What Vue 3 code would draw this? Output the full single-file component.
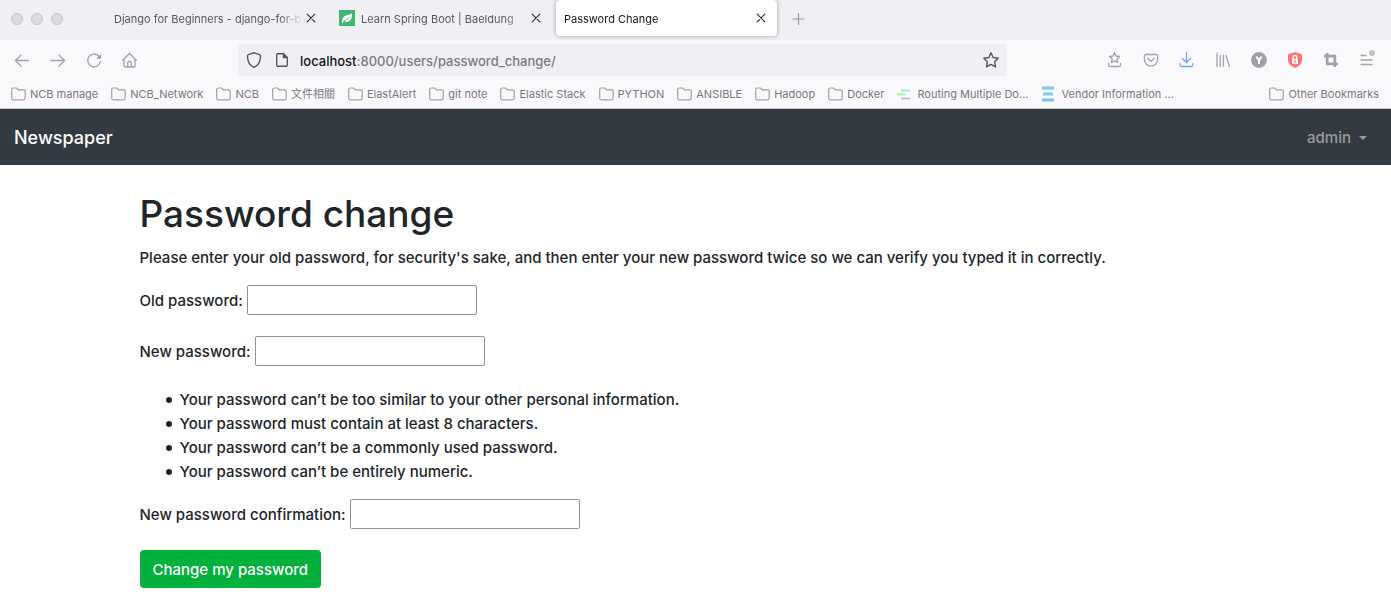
<script setup>
import { ref } from 'vue'

const tabs = [
  { title: 'Django for Beginners - django-for-b', icon: false, active: false },
  { title: 'Learn Spring Boot | Baeldung', icon: true, active: false },
  { title: 'Password Change', icon: false, active: true }
]

const bookmarks = [
  { name: 'NCB manage', icon: 'folder' },
  { name: 'NCB_Network', icon: 'folder' },
  { name: 'NCB', icon: 'folder' },
  { name: '文件相關', icon: 'folder' },
  { name: 'ElastAlert', icon: 'folder' },
  { name: 'git note', icon: 'folder' },
  { name: 'Elastic Stack', icon: 'folder' },
  { name: 'PYTHON', icon: 'folder' },
  { name: 'ANSIBLE', icon: 'folder' },
  { name: 'Hadoop', icon: 'folder' },
  { name: 'Docker', icon: 'folder' },
  { name: 'Routing Multiple Do...', icon: 'routes' },
  { name: 'Vendor Information ...', icon: 'stack' },
  { name: 'Other Bookmarks', icon: 'folder', last: true }
]

const hints = [
  'Your password can’t be too similar to your other personal information.',
  'Your password must contain at least 8 characters.',
  'Your password can’t be a commonly used password.',
  'Your password can’t be entirely numeric.'
]

const oldPassword = ref('')
const newPassword = ref('')
const confirmation = ref('')
</script>

<template>
  <div class="window">
    <header class="chrome">
      <div class="tabstrip">
        <div class="lights"><i></i><i></i><i></i></div>
        <div class="tabs">
          <div v-for="tab in tabs" :key="tab.title" class="tab" :class="{ active: tab.active }">
            <svg v-if="tab.icon" class="favicon" width="16" height="16" viewBox="0 0 16 16">
              <rect width="16" height="16" fill="#3fb772" />
              <path d="M3 12.600C3 9 4 6.500 7 5.500C9 4.800 11 4.800 12.700 3.200C13.300 7 12.500 10 10 11.200C8 12.200 6 11.800 5 11L3.600 13Z" fill="#fff" />
              <path d="M4.500 11C7 10.300 9 9 10.500 6.800" fill="none" stroke="#3fb772" stroke-width="0.800" />
            </svg>
            <span class="tab-title">{{ tab.title }}</span>
            <button class="tab-close" type="button" aria-label="Close tab">
              <svg width="16" height="16" viewBox="0 0 16 16"><path d="M4.200 4.200L11.800 11.800M11.800 4.200L4.200 11.800" stroke="#303036" stroke-width="1.200" stroke-linecap="round" /></svg>
            </button>
          </div>
        </div>
        <button class="tool" type="button" aria-label="New tab">
          <svg width="16" height="16" viewBox="0 0 16 16"><path d="M7.500 1.500V12.500M2 7H13" stroke="#98989d" stroke-width="1.200" stroke-linecap="round" /></svg>
        </button>
      </div>

      <div class="toolbar">
        <div class="nav-tools">
          <button class="tool" type="button" aria-label="Back">
            <svg width="16" height="16" viewBox="0 0 16 16"><path d="M14.500 8.500H1.500M7 3L1.500 8.500L7 14" /></svg>
          </button>
          <button class="tool" type="button" aria-label="Forward">
            <svg width="16" height="16" viewBox="0 0 16 16"><path d="M1 8.500H14.500M9 3L14.500 8.500L9 14" /></svg>
          </button>
          <button class="tool" type="button" aria-label="Reload">
            <svg width="16" height="16" viewBox="0 0 16 16"><path d="M12.900 4.200A6.400 6.400 0 1 0 14.400 9.500" /><path d="M15 2V6.700H10.300Z" fill="#a2a2a7" stroke="none" /></svg>
          </button>
          <button class="tool" type="button" aria-label="Home">
            <svg width="16" height="16" viewBox="0 0 16 16"><path d="M0.700 8.200L7.500 1.500L14.300 8.200M2 7V14Q2 15 3 15H12Q13 15 13 14V7M5.700 15V10.800Q5.700 9.500 7.500 9.500Q9.300 9.500 9.300 10.800V15" /></svg>
          </button>
        </div>

        <div class="address">
          <svg class="dark" width="16" height="16" viewBox="0 0 16 16"><path d="M8 0.800L13.700 2.700Q14.500 3 14.500 3.900C14.500 9 12.800 13.200 8 15.300C3.200 13.200 1.500 9 1.500 3.900Q1.500 3 2.300 2.700Z" /></svg>
          <svg class="dark" width="16" height="16" viewBox="0 0 16 16"><path d="M9.500 1.700H4Q2.700 1.700 2.700 3V13Q2.700 14.300 4 14.300H12Q13.300 14.300 13.300 13V5.500L9.500 1.700V5.500H13.300" /><path d="M9 1.200L13.800 6H9Z" fill="#56565c" stroke="none" /></svg>
          <a class="url" href="#"><b>localhost</b>:8000/users/password_change/</a>
          <svg class="dark" width="16" height="16" viewBox="0 0 16 16"><path d="M8 0.900L10.200 5.500L15.200 6.200L11.600 9.700L12.500 14.800L8 12.400L3.500 14.800L4.400 9.700L0.800 6.200L5.800 5.500Z" stroke-linejoin="round" /></svg>
        </div>

        <div class="ext-tools">
          <button class="tool" type="button" aria-label="Save bookmark">
            <svg width="16" height="16" viewBox="0 0 16 16"><path d="M7.500 0.800L9 4L12.400 4.500L9.900 7L10.500 10.400L7.500 8.800L4.500 10.400L5.100 7L2.600 4.500L6 4ZM1.500 11.500V13Q1.500 14.500 3 14.500H12Q13.500 14.500 13.500 13V11.500" stroke-linejoin="round" /></svg>
          </button>
          <button class="tool" type="button" aria-label="Pocket">
            <svg width="16" height="16" viewBox="0 0 16 16"><path d="M2.800 2.500H13.200Q14.600 2.500 14.600 3.900V7.500A6.600 6.600 0 0 1 1.400 7.500V3.900Q1.400 2.500 2.800 2.500ZM4.700 6.300L8 9.400L11.300 6.300" stroke-linejoin="round" /></svg>
          </button>
          <button class="tool" type="button" aria-label="Downloads">
            <svg class="blue" width="16" height="16" viewBox="0 0 16 16"><path d="M7.500 0.500V10.300M3.500 6.500L7.500 10.500L11.500 6.500M1.200 11.700V13Q1.200 14.500 2.800 14.500H12.200Q13.800 14.500 13.800 13V11.700" /></svg>
          </button>
          <button class="tool" type="button" aria-label="Library">
            <svg width="16" height="16" viewBox="0 0 16 16"><path d="M2 1.500V14.500M5.200 3.500V14.500M8.400 3.500V14.500M11 3.500L14.500 14.500" /></svg>
          </button>
          <button class="tool" type="button" aria-label="Account Y">
            <svg width="16" height="16" viewBox="0 0 16 16"><circle cx="8" cy="8" r="7.900" fill="#9f9fa5" stroke="none" /><path d="M5.300 4.500L8 8.300L10.700 4.500M8 8V12" stroke="#fff" stroke-width="2" stroke-linecap="butt" /></svg>
          </button>
          <button class="tool" type="button" aria-label="Privacy protection">
            <svg width="16" height="16" viewBox="0 0 16 16"><path d="M8 0L15 2.200V7C15 11.500 12 14.500 8 16C4 14.500 1 11.500 1 7V2.200Z" fill="#ff7479" stroke="none" /><rect x="5" y="6.800" width="6" height="5" rx="0.500" fill="#fff" stroke="none" /><path d="M6.200 7V5.300A1.800 1.800 0 0 1 9.800 5.300V7" stroke="#fff" /><path d="M8 8.400V10.200" stroke="#ff7479" /></svg>
          </button>
          <button class="tool" type="button" aria-label="Capture">
            <svg width="16" height="16" viewBox="0 0 16 16"><path d="M1 4.200H11.800V15M4.200 1V11.800H15" stroke-width="2.800" stroke-linecap="butt" /></svg>
          </button>
          <button class="tool" type="button" aria-label="Menu">
            <svg width="16" height="16" viewBox="0 0 16 16"><path d="M2 3.500H7M2 8H13M2 12.500H13" /><circle cx="13" cy="1" r="3" fill="#c3c3c6" stroke="none" /></svg>
          </button>
        </div>
      </div>

      <nav class="bookmarks" aria-label="Bookmarks">
        <a v-for="item in bookmarks" :key="item.name" href="#" :class="{ last: item.last }">
          <svg v-if="item.icon === 'folder'" width="15" height="14" viewBox="0 0 15 14"><path d="M2.200 1H5.500L7.500 2.800H12.700Q14.200 2.800 14.200 4.300V11.300Q14.200 12.800 12.700 12.800H2.200Q0.700 12.800 0.700 11.300V2.500Q0.700 1 2.200 1Z" fill="none" stroke="#a0a0a3" stroke-width="1.200" /></svg>
          <svg v-else-if="item.icon === 'routes'" width="16" height="16" viewBox="0 0 16 16"><path d="M4 4.500H13" stroke="#7df5d3" stroke-width="1.500" /><path d="M0 8.500H8" stroke="#83f58a" stroke-width="1.500" /><path d="M4 12.500H13" stroke="#b5b2cf" stroke-width="1.500" /></svg>
          <svg v-else width="16" height="16" viewBox="0 0 16 16"><path d="M1 2H13M1 14H13" stroke="#7ec4f8" stroke-width="3" /><path d="M2 8H12" stroke="#7ec4f8" stroke-width="3" /></svg>
          <span>{{ item.name }}</span>
        </a>
      </nav>
    </header>

    <nav class="navbar">
      <a class="brand" href="#">Newspaper</a>
      <button class="user" type="button">admin<i class="caret"></i></button>
    </nav>

    <main class="container">
      <h1>Password change</h1>
      <p>Please enter your old password, for security's sake, and then enter your new password twice so we can verify you typed it in correctly.</p>
      <form @submit.prevent>
        <div class="field">
          <label for="old-password">Old password:</label>
          <input id="old-password" v-model="oldPassword" type="password">
        </div>
        <div class="field">
          <label for="new-password">New password:</label>
          <input id="new-password" v-model="newPassword" type="password">
        </div>
        <ul>
          <li v-for="hint in hints" :key="hint">{{ hint }}</li>
        </ul>
        <div class="field">
          <label for="confirm-password">New password confirmation:</label>
          <input id="confirm-password" v-model="confirmation" type="password">
        </div>
        <button class="submit" type="submit">Change my password</button>
      </form>
    </main>
  </div>
</template>

<style>
body {
  margin: 0;
  background: #fff;
}
</style>

<style scoped>
* {
  box-sizing: border-box;
}

.window {
  font-family: Inter, "Noto Sans CJK TC", sans-serif;
  font-size: 15px;
  line-height: 24px;
  font-weight: 500;
  color: #212529;
}

button {
  font: inherit;
  border: 0;
  padding: 0;
  background: none;
}

a {
  color: inherit;
  text-decoration: none;
}

svg {
  display: block;
  flex: none;
}

.chrome {
  background: #f9f9fb;
  border-bottom: 1px solid #c4c4c7;
  font-weight: 400;
}

.tabstrip {
  display: flex;
  align-items: center;
  height: 40px;
  padding: 0 11px;
  background: #f0eff4;
}

.lights {
  display: flex;
  gap: 8px;
  width: 95px;
  padding-bottom: 3px;
}

.lights i {
  width: 12px;
  height: 12px;
  border: 1px solid #c5c4c8;
  border-radius: 50%;
  background: #dbdadd;
}

.tabs {
  display: flex;
  gap: 4px;
  margin-right: 14px;
  align-self: flex-start;
}

.tab {
  display: flex;
  align-items: center;
  width: 221px;
  height: 36px;
  padding: 0 8px;
  border-radius: 4px;
  font-size: 11px;
  color: #58585e;
}

.tab.active {
  background: #fff;
  color: #15141a;
  box-shadow: 0 0 4px rgba(0, 0, 0, 0.35);
}

.favicon {
  margin-right: 6px;
}

.tab-title {
  flex: 1;
  overflow: hidden;
  white-space: nowrap;
  padding-top: 2px;
  mask-image: linear-gradient(to left, transparent, #000 24px);
}

.tool svg {
  fill: none;
  stroke: #a2a2a7;
  stroke-width: 1.3;
  stroke-linecap: round;
  overflow: visible;
}

.tool svg.blue {
  stroke: #75a2f5;
}

.toolbar {
  display: flex;
  align-items: center;
  height: 40px;
  padding: 0 16px 0 14px;
}

.nav-tools,
.ext-tools {
  display: flex;
  gap: 20px;
}

.nav-tools {
  margin-right: 100px;
}

.ext-tools {
  margin-left: 100px;
}

.address {
  flex: 1;
  display: flex;
  align-items: center;
  gap: 12px;
  height: 32px;
  padding: 0 8px;
  border-radius: 4px;
  background: #f0eff4;
}

.dark {
  fill: none;
  stroke: #56565c;
  stroke-width: 1.4;
}

.url {
  flex: 1;
  padding-top: 2px;
  margin-left: -2px;
  font-size: 13px;
  font-weight: 500;
  color: #7b7b80;
}

.url b {
  font-weight: inherit;
  color: #15141a;
}

.bookmarks {
  display: flex;
  align-items: center;
  gap: 13px;
  height: 28px;
  padding: 0 12px 0 11px;
  font-size: 11px;
  color: #78787c;
  white-space: nowrap;
}

.bookmarks a {
  display: flex;
  align-items: center;
  gap: 4px;
}

.bookmarks .last {
  margin-left: auto;
}

.navbar {
  display: flex;
  align-items: center;
  justify-content: space-between;
  height: 56px;
  padding: 2px 24px 0 14px;
  background: #343a42;
}

.brand {
  font-size: 18px;
  color: #fff;
}

.user {
  display: flex;
  align-items: center;
  gap: 8px;
  color: #999c9f;
}

.caret {
  border: 4px solid transparent;
  border-top-color: currentColor;
  border-bottom: 0;
}

.container {
  max-width: 1140px;
  margin: 0 auto;
  padding: 24px 14px;
}

h1 {
  margin: 0 0 9px;
  padding-top: 2px;
  font-size: 37px;
  line-height: 46px;
  font-weight: 500;
}

p {
  margin: 0 0 15px;
}

.field {
  display: flex;
  align-items: center;
  gap: 4px;
  margin-bottom: 21px;
}

.field label {
  padding-top: 2px;
}

.field input {
  width: 230px;
  height: 30px;
  padding: 2px 4px;
  border: 1px solid #8f8f9d;
  border-radius: 2px;
  background: #fff;
  font: inherit;
}

ul {
  margin: 0 0 15px;
  padding: 1px 0 0 26px;
  list-style: none;
}

li {
  display: flex;
  align-items: center;
  gap: 8px;
}

li::before {
  content: "";
  width: 6px;
  height: 6px;
  border-radius: 50%;
  background: currentColor;
}

.submit {
  height: 38px;
  padding: 2px 13px 0;
  border-radius: 4px;
  background: #02b03c;
  color: #fff;
}
</style>
